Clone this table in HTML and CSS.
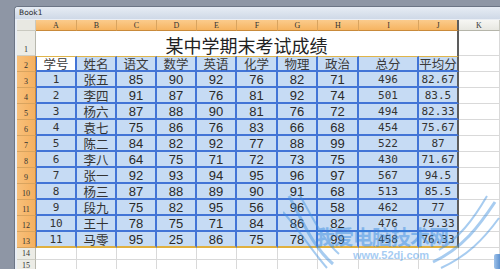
FILE: index.html
```html
<!DOCTYPE html>
<html>
<head>
<meta charset="utf-8">
<link rel="stylesheet" href="styles.css">
</head>
<body>
<div class="desk">
  <div class="window">
    <div class="titlebar">Book1</div>
    <div class="sheet">
      <div class="corner"></div>
      <div class="ch sel">A</div><div class="ch sel">B</div><div class="ch sel">C</div><div class="ch sel">D</div><div class="ch sel">E</div><div class="ch sel">F</div><div class="ch sel">G</div><div class="ch sel">H</div><div class="ch sel">I</div><div class="ch sel last">J</div><div class="ch">K</div>

      <div class="rh">1</div>
      <div class="title">某中学期末考试成绩</div>
      <div class="c blank">&nbsp;</div>

      <div class="rh sel">2</div>
      <div class="d hd first active">学号</div><div class="d hd">姓名</div><div class="d hd">语文</div><div class="d hd">数学</div><div class="d hd">英语</div><div class="d hd">化学</div><div class="d hd">物理</div><div class="d hd">政治</div><div class="d hd">总分</div><div class="d hd last">平均分</div>
      <div class="c"></div>

      <div class="rh sel">3</div>
      <div class="d first m">1</div><div class="d cn">张五</div><div class="d">85</div><div class="d">90</div><div class="d">92</div><div class="d">76</div><div class="d">82</div><div class="d">71</div><div class="d m">496</div><div class="d m last">82.67</div>
      <div class="c"></div>

      <div class="rh sel">4</div>
      <div class="d first m">2</div><div class="d cn">李四</div><div class="d">91</div><div class="d">87</div><div class="d">76</div><div class="d">81</div><div class="d">92</div><div class="d">74</div><div class="d m">501</div><div class="d m last">83.5</div>
      <div class="c"></div>

      <div class="rh sel">5</div>
      <div class="d first m">3</div><div class="d cn">杨六</div><div class="d">87</div><div class="d">88</div><div class="d">90</div><div class="d">81</div><div class="d">76</div><div class="d">72</div><div class="d m">494</div><div class="d m last">82.33</div>
      <div class="c"></div>

      <div class="rh sel">6</div>
      <div class="d first m">4</div><div class="d cn">袁七</div><div class="d">75</div><div class="d">86</div><div class="d">76</div><div class="d">83</div><div class="d">66</div><div class="d">68</div><div class="d m">454</div><div class="d m last">75.67</div>
      <div class="c"></div>

      <div class="rh sel">7</div>
      <div class="d first m">5</div><div class="d cn">陈二</div><div class="d">84</div><div class="d">82</div><div class="d">92</div><div class="d">77</div><div class="d">88</div><div class="d">99</div><div class="d m">522</div><div class="d m last">87</div>
      <div class="c"></div>

      <div class="rh sel">8</div>
      <div class="d first m">6</div><div class="d cn">李八</div><div class="d">64</div><div class="d">75</div><div class="d">71</div><div class="d">72</div><div class="d">73</div><div class="d">75</div><div class="d m">430</div><div class="d m last">71.67</div>
      <div class="c"></div>

      <div class="rh sel">9</div>
      <div class="d first m">7</div><div class="d cn">张一</div><div class="d">92</div><div class="d">93</div><div class="d">94</div><div class="d">95</div><div class="d">96</div><div class="d">97</div><div class="d m">567</div><div class="d m last">94.5</div>
      <div class="c"></div>

      <div class="rh sel">10</div>
      <div class="d first m">8</div><div class="d cn">杨三</div><div class="d">87</div><div class="d">88</div><div class="d">89</div><div class="d">90</div><div class="d">91</div><div class="d">68</div><div class="d m">513</div><div class="d m last">85.5</div>
      <div class="c"></div>

      <div class="rh sel">11</div>
      <div class="d first m">9</div><div class="d cn">段九</div><div class="d">75</div><div class="d">82</div><div class="d">95</div><div class="d">56</div><div class="d">96</div><div class="d">58</div><div class="d m">462</div><div class="d m last">77</div>
      <div class="c"></div>

      <div class="rh sel">12</div>
      <div class="d first m">10</div><div class="d cn">王十</div><div class="d">78</div><div class="d">75</div><div class="d">71</div><div class="d">84</div><div class="d">86</div><div class="d">82</div><div class="d m">476</div><div class="d m last">79.33</div>
      <div class="c"></div>

      <div class="rh sel">13</div>
      <div class="d first m bot">11</div><div class="d cn bot">马零</div><div class="d bot">95</div><div class="d bot">25</div><div class="d bot">86</div><div class="d bot">75</div><div class="d bot">78</div><div class="d bot">99</div><div class="d m bot">458</div><div class="d m last bot">76.33</div>
      <div class="c"></div>

      <div class="rh small">14</div>
      <div class="c"></div><div class="c"></div><div class="c"></div><div class="c"></div><div class="c"></div><div class="c"></div><div class="c"></div><div class="c"></div><div class="c"></div><div class="c"></div><div class="c"></div>

      <div class="rh small">15</div>
      <div class="c"></div><div class="c"></div><div class="c"></div><div class="c"></div><div class="c"></div><div class="c"></div><div class="c"></div><div class="c"></div><div class="c"></div><div class="c"></div><div class="c"></div>
    </div>
  </div>

  <div class="watermark">
    <svg class="wings" width="220" height="80" viewBox="0 0 220 80">
      <path d="M6 4 C 20 30, 30 55, 50 72" fill="none" stroke="#3d8fe0" stroke-width="3"/>
      <path d="M16 2 C 30 26, 40 48, 56 62" fill="none" stroke="#3d8fe0" stroke-width="2"/>
      <path d="M0 20 C 18 40, 28 58, 44 76" fill="none" stroke="#3d8fe0" stroke-width="2"/>
      <path d="M212 10 C 196 34, 180 56, 150 70" fill="none" stroke="#3d8fe0" stroke-width="3"/>
      <path d="M204 4 C 190 28, 176 46, 156 58" fill="none" stroke="#3d8fe0" stroke-width="2"/>
      <path d="M216 26 C 200 48, 184 64, 158 76" fill="none" stroke="#3d8fe0" stroke-width="2"/>
    </svg>
    <div class="wm-name">我爱电脑技术网</div>
    <div class="wm-url">www.52dj.com</div>
  </div>
  <div class="scrollnub"></div>
</div>
</body>
</html>
```

FILE: styles.css
```css
html, body {
  margin: 0;
  padding: 0;
}
body {
  width: 500px;
  height: 269px;
  overflow: hidden;
  background: #8e96a5;
}
.desk {
  position: relative;
  box-sizing: border-box;
  height: 269px;
  padding: 6px 0 0 14px;
}
.window {
  height: 100%;
  box-sizing: border-box;
  border-top: 1px solid #6c7585;
  border-left: 1px solid #6c7585;
  border-radius: 4px 0 0 0;
  background: #e9eef5;
  overflow: hidden;
}
.titlebar {
  height: 12px;
  line-height: 12px;
  padding-left: 4px;
  font-family: "DejaVu Sans", sans-serif;
  font-size: 7.5px;
  color: #2b2b2b;
  background: linear-gradient(#e6ecf4, #cfd9e7);
}
.sheet {
  margin: 1px 0 0 2px;
  display: grid;
  grid-template-columns: 19px 41px 40px 40px 40px 40px 41px 40px 41px 60px 40px 41px;
  grid-template-rows: 11px 25px repeat(12, 16px) 12px 12px;
  background: #ffffff;
}
.corner {
  background: #e8e8e2;
  border-right: 1px solid #c9c9c0;
  border-bottom: 1px solid #c9c9c0;
  box-sizing: border-box;
}
.ch {
  box-sizing: border-box;
  display: flex;
  align-items: center;
  justify-content: center;
  font-family: "Liberation Serif", serif;
  font-size: 8px;
  color: #333;
  background: linear-gradient(#f6f6f3, #e7e7e1);
  border-right: 1px solid #c9c9c0;
  border-bottom: 1px solid #b5b5aa;
}
.ch.sel {
  background: linear-gradient(#fbcb8c, #f6b461);
  border-right: 1px solid #d9a45f;
  border-bottom: 1px solid #c98a3a;
}
.ch.last {
  border-right: 2px solid #5d5d5d;
}
.rh {
  box-sizing: border-box;
  display: flex;
  align-items: flex-end;
  justify-content: center;
  padding-bottom: 1px;
  font-family: "Liberation Serif", serif;
  font-size: 8px;
  color: #333;
  background: #ecece6;
  border-right: 1px solid #b8b8ae;
  border-bottom: 1px solid #cfcfc6;
}
.rh.sel {
  background: linear-gradient(90deg, #f8c07a, #f5b060);
  border-right: 1px solid #c98a3a;
  border-bottom: 1px solid #d9a45f;
}
.rh.small {
  padding-bottom: 0;
  align-items: center;
}
.title {
  grid-column: 2 / 12;
  display: flex;
  align-items: flex-end;
  justify-content: center;
  padding-bottom: 0;
  font-family: "Noto Sans CJK SC", sans-serif;
  font-size: 18px;
  line-height: 22px;
  color: #222;
  background: #ffffff;
  border-right: 2px solid #5d5d5d;
  box-sizing: border-box;
}
.c {
  box-sizing: border-box;
  background: #ffffff;
  border-right: 1px solid #d9d9d9;
  border-bottom: 1px solid #d9d9d9;
}
.d {
  box-sizing: border-box;
  display: flex;
  align-items: center;
  justify-content: center;
  font-family: "Liberation Sans", sans-serif;
  font-size: 13px;
  color: #2a2a2a;
  background: #c6dbf4;
  border-right: 2px solid #4274d6;
  border-bottom: 2px solid #4274d6;
}
.d.first {
  border-left: 1px solid #4274d6;
}
.d.hd {
  font-family: "Noto Sans CJK SC", sans-serif;
  font-size: 12.5px;
  color: #3a3a3a;
  border-top: 1px solid #e0b54a;
}
.d.active {
  background: #ffffff;
}
.d.cn {
  font-family: "Noto Sans CJK SC", sans-serif;
  font-size: 12.5px;
  color: #333;
}
.d.m {
  font-family: "DejaVu Sans Mono", monospace;
  font-size: 11px;
  color: #333;
}
.d.last {
  border-right: 2px solid #5d5d5d;
}
.d.bot {
  border-bottom: 2px solid #e0b040;
}
.watermark {
  position: absolute;
  left: 283px;
  top: 192px;
  width: 220px;
  height: 80px;
  opacity: 0.45;
  pointer-events: none;
}
.wings {
  position: absolute;
  left: 0;
  top: 0;
}
.wm-name {
  position: absolute;
  left: 32px;
  top: 34px;
  font-family: "Noto Sans CJK SC", sans-serif;
  font-weight: bold;
  font-size: 20px;
  line-height: 22px;
  letter-spacing: -1px;
  color: #2f86e0;
  white-space: nowrap;
}
.wm-url {
  position: absolute;
  left: 70px;
  top: 57px;
  font-family: "Liberation Sans", sans-serif;
  font-weight: bold;
  font-size: 11px;
  color: #3a90e6;
}
.scrollnub {
  position: absolute;
  right: 0;
  top: 254px;
  width: 6px;
  height: 15px;
  border-radius: 2px 0 0 2px;
  background: linear-gradient(90deg, #9ec2ea, #5f92cf);
}
```
